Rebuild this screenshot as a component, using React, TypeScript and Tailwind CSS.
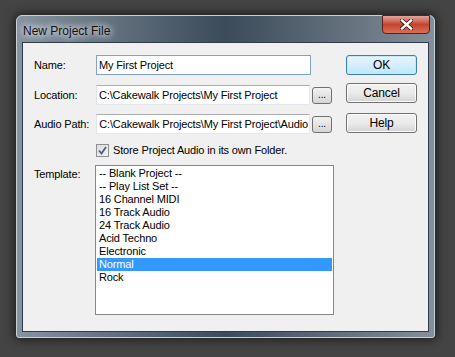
import React from "react";

const items = [
  "-- Blank Project --",
  "-- Play List Set --",
  "16 Channel MIDI",
  "16 Track Audio",
  "24 Track Audio",
  "Acid Techno",
  "Electronic",
  "Normal",
  "Rock",
];

const font = { fontFamily: '"Liberation Sans", Arial, sans-serif' };

const Browse: React.FC = () => (
  <button className="ml-[2px] w-[20px] h-[17px] rounded-[3px] border border-[#707070] bg-gradient-to-b from-[#f2f2f2] to-[#d6d6d6] text-[10px] leading-[10px] text-black flex items-end justify-center pb-[3px]">
    ...
  </button>
);

const DlgButton: React.FC<{ label: string; primary?: boolean }> = ({ label, primary }) => (
  <button
    className={
      "w-[71px] h-[20px] rounded-[3px] border text-[12px] text-black flex items-center justify-center " +
      (primary
        ? "border-[#3c7fb1] bg-gradient-to-b from-[#eaf6fd] to-[#bee6fd] shadow-[inset_0_0_0_1px_#c5e7fb]"
        : "border-[#707070] bg-gradient-to-b from-[#f2f2f2] via-[#ebebeb] to-[#d4d4d4] shadow-[inset_0_0_0_1px_#fcfcfc]")
    }
  >
    {label}
  </button>
);

export default function App() {
  return (
    <div className="w-[455px] h-[357px] bg-[#444444] overflow-hidden pt-[15px] pl-[16px]" style={font}>
      {/* window */}
      <div className="w-[419px] h-[323px] rounded-t-[6px] rounded-b-[3px] border border-[#c9d1d8] shadow-[0_0_10px_2px_rgba(0,0,0,0.55)] bg-gradient-to-r from-[#8693a0] via-[#3c4b59] to-[#848f99] flex flex-col">
        {/* title bar */}
        <div className="relative h-[26px] flex items-start">
          <span className="ml-[6px] mt-[8px] text-[12px] leading-[14px] text-[#111] [text-shadow:0_0_8px_#fff,0_0_6px_#e8edf1]">
            New Project File
          </span>
          <div className="absolute right-[4px] top-[-1px] w-[48px] h-[19px] rounded-b-[4px] border border-[#5a1f18] bg-gradient-to-b from-[#e0a59c] via-[#c4432f] to-[#d8705c] flex items-center justify-center">
            <svg width="13" height="11" viewBox="0 0 13 11">
              <path d="M2 1.5 L11 9.5 M11 1.5 L2 9.5" stroke="#3a1410" strokeWidth="4" strokeLinecap="square" />
              <path d="M2 1.5 L11 9.5 M11 1.5 L2 9.5" stroke="#ffffff" strokeWidth="2.4" strokeLinecap="square" />
            </svg>
          </div>
        </div>
        {/* client */}
        <div className="mx-[5px] mb-[5px] flex-1 border border-[#2e3c49] bg-[#f0f0f0] flex pt-[12px] pl-[11px] text-[11px] tracking-[-0.15px] text-black">
          <div className="w-[300px] flex flex-col">
            <div className="flex items-center h-[20px]">
              <span className="w-[62px] whitespace-nowrap">Name:</span>
              <div className="w-[215px] h-[20px] border border-[#7da2ce] bg-white px-[2px] flex items-center">My First Project</div>
            </div>
            <div className="flex items-center h-[20px] mt-[10px]">
              <span className="w-[62px] whitespace-nowrap">Location:</span>
              <div className="w-[214px] h-[20px] border border-[#abadb3] border-r-[#e3e9ef] border-b-[#e3e9ef] border-l-[#e2e3ea] bg-white px-[2px] flex items-center whitespace-nowrap overflow-hidden">
                C:\Cakewalk Projects\My First Project
              </div>
              <Browse />
            </div>
            <div className="flex items-center h-[20px] mt-[9px]">
              <span className="w-[62px] whitespace-nowrap">Audio Path:</span>
              <div className="w-[214px] h-[20px] border border-[#abadb3] border-r-[#e3e9ef] border-b-[#e3e9ef] border-l-[#e2e3ea] bg-white flex items-center justify-end whitespace-nowrap overflow-hidden">
                <span className="pr-[1px] shrink-0">C:\Cakewalk Projects\My First Project\Audio</span>
              </div>
              <Browse />
            </div>
            <div className="flex items-center h-[14px] mt-[9px] pl-[62px]">
              <div className="w-[13px] h-[13px] border border-[#8e8f8f] bg-gradient-to-br from-[#dcdcdc] to-[#f4f4f4] flex items-center justify-center">
                <svg width="9" height="9" viewBox="0 0 9 9">
                  <path d="M1 4.5 L3.5 7.5 L8 1" stroke="#4a5f97" strokeWidth="1.8" fill="none" />
                </svg>
              </div>
              <span className="ml-[4px] whitespace-nowrap">Store Project Audio in its own Folder.</span>
            </div>
            <div className="flex items-start mt-[8px]">
              <span className="w-[61px] pt-[1px]">Template:</span>
              <div className="w-[239px] h-[150px] border border-[#828790] bg-white p-[1px] flex flex-col">
                {items.map((it) => (
                  <div
                    key={it}
                    className={
                      "h-[13px] leading-[13px] pl-[2px] whitespace-nowrap " +
                      (it === "Normal" ? "bg-[#3399ff] text-white" : "")
                    }
                  >
                    {it}
                  </div>
                ))}
              </div>
            </div>
          </div>
          <div className="ml-[12px] flex flex-col">
            <DlgButton label="OK" primary />
            <div className="mt-[8px]"><DlgButton label="Cancel" /></div>
            <div className="mt-[10px]"><DlgButton label="Help" /></div>
          </div>
        </div>
      </div>
    </div>
  );
}
